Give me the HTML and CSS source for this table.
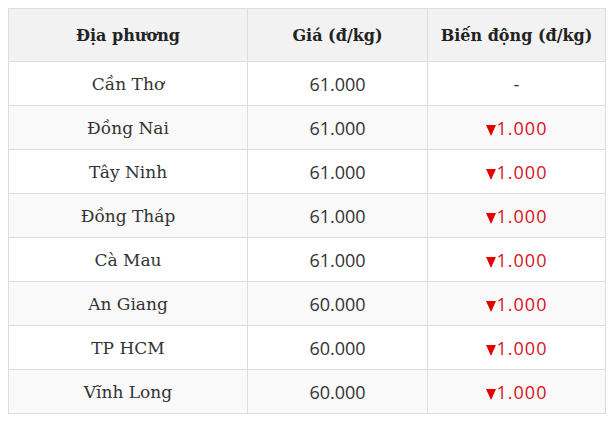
FILE: index.html
```html
<!DOCTYPE html>
<html lang="vi">
<head>
<meta charset="utf-8">
<link rel="stylesheet" href="styles.css">
</head>
<body>
<table class="price-table">
  <colgroup>
    <col class="c1"><col class="c2"><col class="c3">
  </colgroup>
  <thead>
    <tr><th>Địa phương</th><th>Giá (đ/kg)</th><th>Biến động (đ/kg)</th></tr>
  </thead>
  <tbody>
    <tr><td class="loc">Cần Thơ</td><td class="num">61.000</td><td class="num">-</td></tr>
    <tr><td class="loc">Đồng Nai</td><td class="num">61.000</td><td class="down"><span class="tri"></span>1.000</td></tr>
    <tr><td class="loc">Tây Ninh</td><td class="num">61.000</td><td class="down"><span class="tri"></span>1.000</td></tr>
    <tr><td class="loc">Đồng Tháp</td><td class="num">61.000</td><td class="down"><span class="tri"></span>1.000</td></tr>
    <tr><td class="loc">Cà Mau</td><td class="num">61.000</td><td class="down"><span class="tri"></span>1.000</td></tr>
    <tr><td class="loc">An Giang</td><td class="num">60.000</td><td class="down"><span class="tri"></span>1.000</td></tr>
    <tr><td class="loc">TP HCM</td><td class="num">60.000</td><td class="down"><span class="tri"></span>1.000</td></tr>
    <tr><td class="loc">Vĩnh Long</td><td class="num">60.000</td><td class="down"><span class="tri"></span>1.000</td></tr>
  </tbody>
</table>
</body>
</html>
```
FILE: styles.css
```css
body {
  margin: 8px;
  background: #fff;
}
.price-table {
  border-collapse: collapse;
  width: 597px;
  table-layout: fixed;
  color: #333;
}
.c1 { width: 239px; }
.c2 { width: 180px; }
.c3 { width: 178px; }
.price-table th,
.price-table td {
  border: 1px solid #ddd;
  text-align: center;
  padding: 0;
}
.price-table thead th {
  background: #f2f2f2;
  height: 52px;
  font-family: "DejaVu Serif", serif;
  font-weight: bold;
  font-size: 16px;
  color: #222;
}
.price-table tbody td {
  height: 43px;
}
.price-table tbody tr:nth-child(even) td {
  background: #f9f9f9;
}
.loc {
  font-family: "DejaVu Serif", serif;
  font-size: 17px;
}
.num, .down {
  font-family: "Open Sans", sans-serif;
  font-size: 18px;
}
.down {
  color: #d8141e;
  letter-spacing: 1px;
}
.tri {
  display: inline-block;
  width: 0;
  height: 0;
  border-left: 5px solid transparent;
  border-right: 5px solid transparent;
  border-top: 11px solid #e60000;
  margin-right: 1px;
  vertical-align: -1px;
}
```
